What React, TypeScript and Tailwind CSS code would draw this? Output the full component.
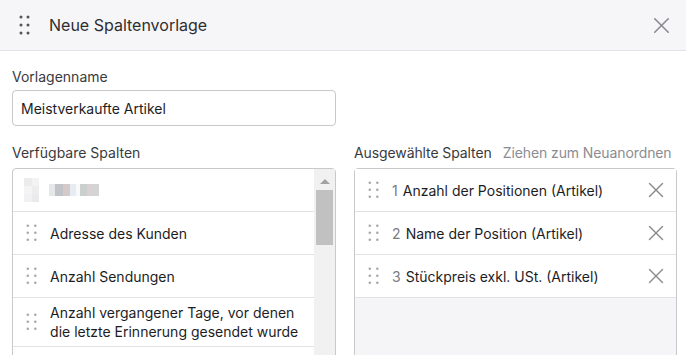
import { X } from 'lucide-react';

const available = [
  { label: 'Adresse des Kunden' },
  { label: 'Anzahl Sendungen' },
  { label: 'Anzahl vergangener Tage, vor denen', second: 'die letzte Erinnerung gesendet wurde' },
];

const selected = ['Anzahl der Positionen (Artikel)', 'Name der Position (Artikel)', 'Stückpreis exkl. USt. (Artikel)'];

function Dots({ color = '#a9a9ad', big = false }: { color?: string; big?: boolean }) {
  const r = big ? 1.5 : 1.3;
  const dx = big ? 7 : 7.5;
  const dy = big ? 8 : 7;
  return (
    <svg width={dx + 2 * r + 1} height={2 * dy + 2 * r + 1} className="shrink-0">
      {[0, 1, 2].map((i) =>
        [0, 1].map((j) => <circle key={`${i}-${j}`} cx={r + 0.5 + j * dx} cy={r + 0.5 + i * dy} r={r} fill={color} />),
      )}
    </svg>
  );
}

export default function App() {
  return (
    <div className="h-[355px] w-[686px] overflow-hidden bg-white font-['Inter',sans-serif] text-[14px] text-[#1d1d1f]">
      <header className="flex h-[51px] items-center border-b border-[#e2e2e6] bg-[#f6f6f8] pl-[19px] pr-[11px]">
        <Dots color="#555559" big />
        <span className="ml-[19px] text-[16px] text-[#2e2e32]">Neue Spaltenvorlage</span>
        <X className="ml-auto text-[#8a8a90]" size={27} strokeWidth={1.4} />
      </header>

      <div className="pl-[12px] pr-[9px] pt-[16px]">
        <div className="leading-[20px] text-[#3a3a3e]">Vorlagenname</div>
        <div className="mt-[3px] flex h-[36px] w-[324px] items-center rounded-[4px] border border-[#c9c9cc] px-[8px]">
          Meistverkaufte Artikel
        </div>

        <div className="mt-[17px] grid grid-cols-[324px_323px] gap-x-[18px]">
          <div>
            <div className="mb-[5px] leading-[20px] text-[#3a3a3e]">Verfügbare Spalten</div>
            <div className="flex h-[200px] rounded-t-[4px] border border-[#c9c9cc]">
              <div className="flex-1">
                <div className="flex h-[43px] items-center gap-[10px] border-b border-[#e2e2e6] pl-[11px]">
                  <div className="grid h-[24px] w-[15px] grid-cols-2 grid-rows-3 opacity-70">
                    <span className="bg-[#e4e4e6]" />
                    <span className="bg-[#eeeeef]" />
                    <span className="bg-[#f0f0f1]" />
                    <span className="bg-[#e6e6e8]" />
                    <span className="bg-[#ececee]" />
                    <span className="bg-[#e2e2e4]" />
                  </div>
                  <div className="flex h-[12px] w-[50px] opacity-60">
                    <span className="w-[6px] bg-[#d6d8dc]" />
                    <span className="w-[8px] bg-[#9a9ca4]" />
                    <span className="w-[7px] bg-[#b8a8a8]" />
                    <span className="w-[6px] bg-[#d8e0ea]" />
                    <span className="w-[4px] bg-[#f4f6f8]" />
                    <span className="w-[7px] bg-[#a9b0ae]" />
                    <span className="w-[5px] bg-[#c4b4b8]" />
                    <span className="w-[7px] bg-[#b8b8bc]" />
                  </div>
                </div>
                {available.map((a) => (
                  <div
                    key={a.label}
                    className={`flex items-center border-b border-[#e2e2e6] pl-[13px] ${a.second ? 'h-[49px]' : 'h-[43px]'}`}
                  >
                    <Dots />
                    <div className="ml-[13px] leading-[19px]">
                      {a.label}
                      {a.second && (
                        <>
                          <br />
                          {a.second}
                        </>
                      )}
                    </div>
                  </div>
                ))}
                <div className="h-[43px]" />
              </div>
              <div className="flex w-[21px] flex-col items-center bg-[#f1f1f1]">
                <svg width="10" height="6" className="mt-[9px]">
                  <polygon points="0,6 5,1 10,6" fill="#a3a3a3" />
                </svg>
                <div className="mt-[6px] h-[55px] w-[17px] bg-[#c1c1c1]" />
              </div>
            </div>
          </div>

          <div>
            <div className="mb-[5px] flex gap-[11px] whitespace-nowrap leading-[20px] tracking-[-0.1px]">
              <span className="text-[#3a3a3e]">Ausgewählte Spalten</span>
              <span className="text-[#8c8c92]">Ziehen zum Neuanordnen</span>
            </div>
            <div className="h-[200px] rounded-t-[4px] border border-[#c9c9cc] bg-[#f5f5f7]">
              {selected.map((s, i) => (
                <div key={s} className="flex h-[43px] items-center border-b border-[#e2e2e6] bg-white pl-[13px] pr-[7px]">
                  <Dots />
                  <span className="ml-[13px] text-[#7a7a80]">{i + 1}</span>
                  <span className="ml-[5px]">{s}</span>
                  <X className="ml-auto text-[#8a8a90]" size={26} strokeWidth={1.3} />
                </div>
              ))}
            </div>
          </div>
        </div>
      </div>
    </div>
  );
}
